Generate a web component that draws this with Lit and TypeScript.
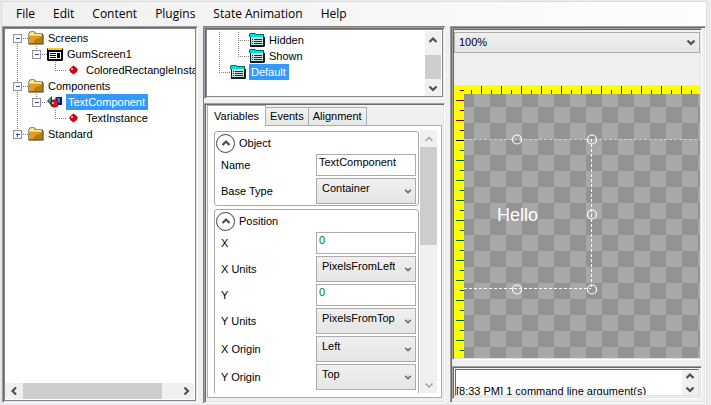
import { LitElement, html, css, svg, nothing, TemplateResult } from "lit";
import { customElement, property } from "lit/decorators.js";
import { classMap } from "lit/directives/class-map.js";

type IconName = "folder" | "screen" | "instance" | "component" | "state";

interface TreeRow {
  label: string;
  depth: number;
  icon: IconName;
  expander?: "-" | "+";
  selected?: boolean;
  /** vertical guide segments: level, from y, to y */
  guides: [number, number, number][];
}

const icons: Record<IconName, TemplateResult> = {
  folder: svg`
    <path d="M0.5 14.5V3.5L2 1.5h4.5l1.5 2h6.5l1 1.5v9.5z" fill="#3a2400"/>
    <path d="M1 3.5L2.500 2h3.500l1.500 2H14v2H1z" fill="#fde58a"/>
    <path d="M1 5h13.500v8.500H1z" fill="#d9a021"/>
    <path d="M1 5h12v1H1z" fill="#f6cf55"/>
    <path d="M8 9l6-2v6H5z" fill="#b87c0c"/>`,
  screen: svg`
    <path d="M1 2h14l1 1v11l-1 1H1l-1-1V3z" fill="#000"/>
    <path d="M1 2h14v2H1z" fill="#ffc61a"/>
    <path d="M2 6h12v7H2z" fill="#fff"/>
    <path d="M3 7h6v1H3zM3 9h6v1H3zM3 11h6v1H3zM10 7h3v5h-3z" fill="#000"/>`,
  instance: svg`
    <path d="M7.500 3.500L12 8l-4.500 4.500L3 8z" fill="#5a0000"/>
    <circle cx="7.500" cy="8" r="3.600" fill="#c40d16"/>
    <path d="M5 6h2v2H5z" fill="#ff9c9c"/>`,
  component: svg`
    <path d="M0 7l5-5v10z" fill="#004c40"/><path d="M1 7l3-3v5z" fill="#20b08c"/>
    <path d="M8 4l2-1h5v8h-4z" fill="#00176e"/><path d="M10 4h3v5h-3z" fill="#2f6ff0"/>
    <circle cx="7.500" cy="9.500" r="4" fill="#6b0000"/><circle cx="7.500" cy="9.500" r="3.200" fill="#e0131c"/>
    <path d="M5 8h2v2H5z" fill="#ffa0a0"/>`,
  state: svg`
    <path d="M0 2l1-1h5l1 1h8v3H0z" fill="#006a6a"/>
    <path d="M1 2h5l1 1h7v2H1z" fill="#00e0dc"/>
    <path d="M1 5h15v9l-1 1H1z" fill="#102024"/>
    <path d="M2 5h12v8H2z" fill="#c9dcd8"/>
    <path d="M3 7h1v1H3zM5 7h8v1H5zM3 9h1v1H3zM5 9h8v1H5zM3 11h1v1H3zM5 11h8v1H5z" fill="#10403c"/>`,
};

type Direction = "up" | "down" | "left" | "right";
type Tone = "bold" | "faint" | "small";

const chevron = (dir: Direction, tone: Tone = "bold") => {
  const d = {
    up: "M1.500 7L5 3.500 8.500 7",
    down: "M1.500 3.500L5 7 8.500 3.500",
    left: "M7 1.500L3.500 5 7 8.500",
    right: "M3.500 1.500L7 5 3.500 8.500",
  }[dir];
  const size = tone === "small" ? 8 : 10;
  const stroke = { bold: "#505050", faint: "#a0a0a0", small: "#707070" }[tone];
  return html`<svg width=${size} height=${size} viewBox="0 0 10 10" aria-hidden="true">
    <path d=${d} fill="none" stroke=${stroke} stroke-width=${tone === "faint" ? 1.5 : 2.2} />
  </svg>`;
};

@customElement("scroll-bar")
class ScrollBar extends LitElement {
  @property({ type: Boolean, reflect: true }) horizontal = false;
  @property({ type: Boolean }) faint = false;
  @property({ attribute: false }) parts: [number, number, number] = [0, 1, 0];

  static styles = css`
    :host { display: flex; flex-direction: column; width: 16px; background: #f0f0f0; overflow: hidden; }
    :host([horizontal]) { flex-direction: row; width: auto; height: 16px; }
    button {
      flex: 0 1 17px; min-width: 0; min-height: 0; padding: 0; border: 0; background: none;
      display: flex; align-items: center; justify-content: center; color: inherit;
    }
    svg { flex: none; display: block; }
    .thumb { background: #cdcdcd; }
  `;

  render() {
    const [before, thumb, after] = this.parts;
    const tone: Tone = this.faint ? "faint" : "bold";
    return html`
      <button aria-label="Scroll back">${chevron(this.horizontal ? "left" : "up", tone)}</button>
      <div style="flex:${before} 0 0"></div>
      <div class="thumb" style="flex:${thumb} 0 0"></div>
      <div style="flex:${after} 0 0"></div>
      <button aria-label="Scroll forward">${chevron(this.horizontal ? "right" : "down", tone)}</button>
    `;
  }
}

@customElement("tree-view")
class TreeView extends LitElement {
  @property({ attribute: false }) rows: TreeRow[] = [];

  static styles = css`
    :host { display: block; overflow: hidden; font: 11px/16px "Liberation Sans", Arial, sans-serif; color: #000; }
    ul { list-style: none; margin: 0; padding: 1px 0 0; }
    li { display: flex; height: 16px; white-space: nowrap; }
    svg { flex: none; display: block; }
    .label { padding: 0 1px; }
    .selected { background: #3399ff; color: #fff; padding: 0 3px 0 2px; }
    .guide { stroke: #808080; stroke-dasharray: 1 1; }
  `;

  private gutter(row: TreeRow) {
    const x = 12 + row.depth * 19;
    const width = 42 + row.depth * 19;
    return html`<svg width=${width} height="16" aria-hidden="true" shape-rendering="crispEdges">
      ${row.guides.map(
        ([level, y1, y2]) => svg`<line class="guide" x1=${12.5 + level * 19} x2=${12.5 + level * 19} y1=${y1} y2=${y2} />`
      )}
      <line class="guide" x1=${x} x2=${width - 19} y1="8.5" y2="8.5" />
      ${row.expander
        ? svg`<rect x=${x - 3.5} y="4.5" width="8" height="8" fill="#fff" stroke="#919191" />
            <path d="M${x - 1.5} 8.500h4" stroke="#3054a8" />
            ${row.expander === "+" ? svg`<path d="M${x + 0.5} 6.500v4" stroke="#3054a8" />` : nothing}`
        : nothing}
      <g transform="translate(${width - 19} 0)" shape-rendering="auto">${icons[row.icon]}</g>
    </svg>`;
  }

  render() {
    return html`<ul role="tree">
      ${this.rows.map(
        (row) => html`<li role="treeitem" aria-selected=${row.selected ? "true" : "false"}>
          ${this.gutter(row)}<span class=${classMap({ label: true, selected: !!row.selected })}>${row.label}</span>
        </li>`
      )}
    </ul>`;
  }
}

@customElement("design-canvas")
class DesignCanvas extends LitElement {
  static styles = css`
    :host { display: block; overflow: hidden; background: #ff0; }
    svg { display: block; width: 100%; height: 100%; }
    .hello { font: 18px "Liberation Sans", Arial, sans-serif; fill: #fff; }
  `;

  render() {
    const reds = [5, 15, 25, 35, 45];
    const handles = [[63, 54], [138, 54], [138, 129], [63, 204], [138, 204]];
    return html`<svg>
      <defs>
        <pattern id="checker" x="4" y="6" width="32" height="32" patternUnits="userSpaceOnUse">
          <rect width="32" height="32" fill="#a8a8a8" />
          <path d="M0 0h16v16H0zM16 16h16v16H16z" fill="#939393" />
        </pattern>
        <pattern id="ticks-x" x="17" y="0" width="20" height="9" patternUnits="userSpaceOnUse">
          <path d="M0 5h1v4H0zM10 1h1v8h-1z" fill="#006400" />
        </pattern>
        <pattern id="ticks-y" x="0" y="65" width="10" height="20" patternUnits="userSpaceOnUse">
          <path d="M6 0h4v1H6zM2 10h8v1H2z" fill="#006400" />
        </pattern>
      </defs>
      <g shape-rendering="crispEdges">
        <rect x="10" y="9" width="100%" height="100%" fill="url(#checker)" />
        <rect x="17" y="0" width="100%" height="9" fill="url(#ticks-x)" />
        <rect x="0" y="65" width="10" height="100%" fill="url(#ticks-y)" />
        ${reds.map((y, i) => svg`<rect x=${i % 2 ? 2 : 6} y=${y} width=${i % 2 ? 8 : 4} height="1" fill="#800000" />`)}
        <rect x="2" y="55" width="8" height="1" fill="#000" />
        <line x1="10" x2="100%" y1="54.5" y2="54.5" stroke="#b4d8de" stroke-dasharray="3 2" />
        <path d="M137.500 54v150M10 203.500h127" stroke="#fff" stroke-dasharray="3 2" fill="none" />
      </g>
      ${handles.map(([x, y]) => svg`<circle cx=${x} cy=${y + 0.5} r="4.500" fill="none" stroke="#fff" stroke-width="1.200" />`)}
      <text class="hello" x="43" y="136">Hello</text>
    </svg>`;
  }
}

interface Field {
  label: string;
  value: string;
  kind: "text" | "number" | "choice";
}

const groups: { title: string; fields: Field[] }[] = [
  {
    title: "Object",
    fields: [
      { label: "Name", value: "TextComponent", kind: "text" },
      { label: "Base Type", value: "Container", kind: "choice" },
    ],
  },
  {
    title: "Position",
    fields: [
      { label: "X", value: "0", kind: "number" },
      { label: "X Units", value: "PixelsFromLeft", kind: "choice" },
      { label: "Y", value: "0", kind: "number" },
      { label: "Y Units", value: "PixelsFromTop", kind: "choice" },
      { label: "X Origin", value: "Left", kind: "choice" },
      { label: "Y Origin", value: "Top", kind: "choice" },
    ],
  },
];

const elementRows: TreeRow[] = [
  { label: "Screens", depth: 0, icon: "folder", expander: "-", guides: [[0, 8, 16]] },
  { label: "GumScreen1", depth: 1, icon: "screen", expander: "-", guides: [[0, 0, 16], [1, 0, 8]] },
  { label: "ColoredRectangleInsta", depth: 2, icon: "instance", guides: [[0, 0, 16], [2, 0, 8]] },
  { label: "Components", depth: 0, icon: "folder", expander: "-", guides: [[0, 0, 16]] },
  { label: "TextComponent", depth: 1, icon: "component", expander: "-", selected: true, guides: [[0, 0, 16], [1, 0, 8]] },
  { label: "TextInstance", depth: 2, icon: "instance", guides: [[0, 0, 16], [2, 0, 8]] },
  { label: "Standard", depth: 0, icon: "folder", expander: "+", guides: [[0, 0, 8]] },
];

const stateRows: TreeRow[] = [
  { label: "Hidden", depth: 1, icon: "state", guides: [[0, 0, 16], [1, 0, 16]] },
  { label: "Shown", depth: 1, icon: "state", guides: [[0, 0, 16], [1, 0, 8]] },
  { label: "Default", depth: 0, icon: "state", selected: true, guides: [[0, 0, 8]] },
];

@customElement("app-root")
class AppRoot extends LitElement {
  static styles = css`
    :host {
      display: block; box-sizing: border-box; height: 100vh; padding: 1px 4px 2px 1px;
      background: #ececec; color: #000; overflow: hidden;
      font: 11px/16px "Liberation Sans", Arial, sans-serif;
    }
    * { box-sizing: border-box; }
    input, select, button { font: inherit; color: inherit; margin: 0; border-radius: 0; }
    .window {
      height: 100%; display: grid; grid-template-rows: 24px minmax(0, 1fr);
      border: 1px solid #dcdcdc; border-bottom-width: 0; background: #f0f0f0;
    }
    .menu {
      display: flex; align-items: center; gap: 18px; padding: 0 14px;
      background: linear-gradient(90deg, #f0f0f0, #fdfdfd);
      font: 12px/16px "Open Sans", "Noto Sans", sans-serif;
    }
    .menu button { padding: 0; border: 0; background: none; }
    .columns { display: grid; grid-template-columns: 196fr 242fr 256fr; gap: 5px; min-height: 0; }
    .ring {
      min-height: 0; min-width: 0; padding: 1px;
      border: 1px solid; border-color: #a0a0a0 #fff #fff #a0a0a0;
      box-shadow: inset 1px 1px #696969, inset -1px -1px #e3e3e3;
    }
    .edge { border: 0 solid #808080; border-width: 1px 0 0 1px; min-height: 0; min-width: 0; }
    .field-box { border: 1px solid #828790; background: #fff; height: 100%; }
    .elements { display: grid; grid-template-rows: minmax(0, 1fr) 16px; padding-bottom: 1px; }
    .elements scroll-bar { margin-right: 1px; }
    .middle { display: grid; grid-template-rows: 72px minmax(0, 1fr); gap: 4px; }
    .states { display: grid; grid-template-columns: minmax(0, 1fr) 16px; padding: 1px 1px 0 0; }

    .tabs-panel { display: grid; grid-template-rows: 19px minmax(0, 1fr); padding: 2px 2px 4px; }
    .tabs { display: flex; align-items: flex-end; }
    .tab {
      height: 18px; padding: 0 4px; border: 1px solid #acacac; border-left-width: 0; border-bottom: 0;
      background: linear-gradient(#f2f2f2, #e6e6e6); line-height: 15px;
    }
    .tab.active { height: 21px; padding: 0 6px; margin-bottom: -1px; border-left: 1px solid #acacac; background: #fff; z-index: 1; }
    .page {
      display: grid; grid-template-columns: minmax(0, 1fr) 17px; gap: 1px; min-height: 0;
      border: 1px solid #acacac; background: #fff; padding: 4px 4px 4px 6px;
    }
    .page scroll-bar { width: 17px; }
    .groups { overflow: hidden; display: flex; flex-direction: column; gap: 3px; padding-top: 1px; }
    .group { flex: none; border: 1px solid #a9a9a9; border-radius: 3px; padding: 0 2px 1px 1px; margin: 0; }
    .group.open { padding-bottom: 8px; }
    .group-head { display: flex; align-items: center; gap: 4px; height: 22px; }
    .toggle {
      width: 19px; height: 19px; padding: 0; border: 1px solid #404040; border-radius: 50%; background: #fff;
      display: flex; align-items: center; justify-content: center;
    }
    .fields { display: flex; flex-direction: column; gap: 2px; }
    .row { display: grid; grid-template-columns: minmax(0, 1fr) 100px; align-items: center; }
    .row label { padding-left: 5px; }
    .text { width: 100%; height: 22px; border: 1px solid #abadb3; background: #fff; padding: 0 2px 6px; outline: 0; }
    .number { color: #008000; }
    .choice { display: grid; align-items: center; }
    .choice > * { grid-area: 1 / 1; }
    .choice svg { justify-self: end; margin-right: 4px; pointer-events: none; }
    .choice select {
      appearance: none; width: 100%; height: 26px; border: 1px solid #acacac; padding: 0 20px 6px 5px;
      background: linear-gradient(#f0f0f0, #e5e5e5); text-overflow: clip; overflow: hidden;
    }
    .choice .zoom { height: 21px; padding: 0 20px 0 4px; }

    .right { display: grid; grid-template-rows: minmax(0, 1fr) 33px; gap: 6px; padding: 1px 3px 3px 1px; }
    .editor { display: grid; grid-template-rows: 22px minmax(0, 1fr); row-gap: 32px; padding-top: 2px; }
    .output-panel { padding: 2px; }
    .log {
      display: grid; grid-template-columns: minmax(0, 1fr) 16px; height: 100%; min-height: 0; overflow: hidden;
      background: #fff; border: 1px solid; border-color: #696969 #e3e3e3 #e3e3e3 #696969;
    }
    .log output { overflow: hidden; white-space: nowrap; padding-top: 13px; }
  `;

  private field(f: Field) {
    const id = f.label.toLowerCase().replace(" ", "-");
    return html`<div class="row">
      <label for=${id}>${f.label}</label>
      ${f.kind === "choice"
        ? html`<span class="choice">
            <select id=${id}><option>${f.value}</option></select>${chevron("down", "small")}
          </span>`
        : html`<input id=${id} class=${classMap({ text: true, number: f.kind === "number" })} .value=${f.value} />`}
    </div>`;
  }

  render() {
    return html`<div class="window">
      <nav class="menu">
        ${["File", "Edit", "Content", "Plugins", "State Animation", "Help"].map((m) => html`<button>${m}</button>`)}
      </nav>
      <main class="columns">
        <section class="ring">
          <div class="field-box elements">
            <tree-view .rows=${elementRows}></tree-view>
            <scroll-bar horizontal .parts=${[1, 139, 15]}></scroll-bar>
          </div>
        </section>
        <section class="edge middle">
          <div class="ring">
            <div class="field-box states">
              <tree-view .rows=${stateRows}></tree-view>
              <scroll-bar .parts=${[7, 22, 0]}></scroll-bar>
            </div>
          </div>
          <div class="ring tabs-panel">
            <div class="tabs" role="tablist">
              <button class="tab active" role="tab" aria-selected="true">Variables</button>
              <button class="tab" role="tab">Events</button>
              <button class="tab" role="tab">Alignment</button>
            </div>
            <div class="page" role="tabpanel">
              <div class="groups">
                ${groups.map(
                  (g) => html`<section class=${classMap({ group: true, open: g.title === "Position" })}>
                    <div class="group-head">
                      <button class="toggle" aria-label="Collapse ${g.title}">${chevron("up")}</button>
                      <span>${g.title}</span>
                    </div>
                    <div class="fields">${g.fields.map((f) => this.field(f))}</div>
                  </section>`
                )}
              </div>
              <scroll-bar faint .parts=${[0, 98, 130]}></scroll-bar>
            </div>
          </div>
        </section>
        <section class="ring right">
          <div class="ring editor">
            <span class="choice">
              <select class="zoom" aria-label="Zoom"><option>100%</option></select>${chevron("down")}
            </span>
            <design-canvas></design-canvas>
          </div>
          <div class="ring output-panel">
            <div class="log">
              <output>[8:33 PM] 1 command line argument(s)</output>
              <scroll-bar .parts=${[0, 0, 0]}></scroll-bar>
            </div>
          </div>
        </section>
      </main>
    </div>`;
  }
}
